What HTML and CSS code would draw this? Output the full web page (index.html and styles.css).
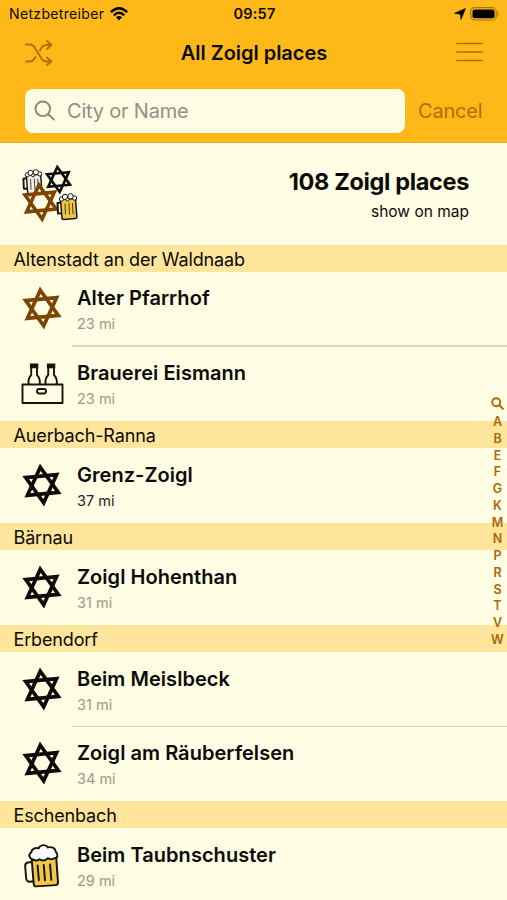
FILE: index.html
```html
<!DOCTYPE html>
<html lang="en">
<head>
<meta charset="utf-8">
<title>All Zoigl places</title>
<link rel="stylesheet" href="styles.css">
</head>
<body>
<svg class="defs" aria-hidden="true">
  <symbol id="star" viewBox="-22 -22 44 44">
    <g transform="rotate(-5.500)" fill="none" stroke="currentColor" stroke-width="3.700">
      <path d="M0-17.800 15.500 8.900H-15.500Z"/>
      <path d="M0 17.800 15.500-8.900H-15.500Z"/>
    </g>
  </symbol>
  <symbol id="mug" viewBox="0 0 44 48">
    <g stroke="#17140c" stroke-width="2" stroke-linejoin="round" stroke-linecap="round">
      <path fill="none" d="M11 19.500 6.500 20Q3.600 20.500 3.800 24L4.800 36Q5.200 40 9 39.500L12 39"/>
      <path d="M10.500 17 12.500 42Q12.800 44.500 15 44.300L35 43Q37.500 42.800 37.300 40L35.500 15Z"/>
      <path fill="none" d="M16.500 23 17.800 38M22.800 22.500 24 38M29.200 22 30.500 37.500"/>
      <path fill="#fff" d="M12 17C8 16 6.500 12 10 9.500C10.500 6 14 4.500 17.500 5.500C19 1.500 25 1 27 4.500C31 3.500 35 5.500 35 9C38 11.500 37 15.500 33.500 15.500C31 18 28.500 16 27 15.500C24 19 20 18 18.500 16.500C16 18.500 13.500 18 12 17Z"/>
    </g>
  </symbol>
  <symbol id="mini-mug" viewBox="0 0 24 29">
    <g stroke="#17140c" stroke-width="1.500" stroke-linejoin="round">
      <path fill="none" stroke-width="2" d="M6 10 2.500 10.500 3 21 7 21"/>
      <path d="M5.500 7 7 25.500Q7 27 9 27L20 26Q22 26 21.800 24L20.500 6Z"/>
      <path fill="none" stroke-width=".8" d="M10 11 10.500 22M14 10.500 14.500 22M17.500 10.500 18 21.500"/>
      <g fill="#fff" stroke-width="1"><circle cx="6.500" cy="6.500" r="2.200"/><circle cx="19.500" cy="5.500" r="2.200"/><circle cx="10" cy="4.500" r="2.700"/><circle cx="15.500" cy="3.800" r="2.700"/><circle cx="12.500" cy="7" r="1.600"/></g>
    </g>
  </symbol>
</svg>
<header class="top">
  <div class="status">
    <div class="carrier"><span class="t carrier-name">Netzbetreiber</span>
      <svg width="18" height="14" viewBox="0 0 18 14"><g fill="none" stroke="#000" stroke-width="2.400"><path d="M.8 5.200Q9-2.600 17.200 5.200"/><path d="M3.800 8.300Q9 3.400 14.200 8.300"/></g><path d="M9 13.500 6 10.300Q9 7.800 12 10.300Z"/></svg>
    </div>
    <span class="t clock">09:57</span>
    <div class="power">
      <svg width="12" height="12" viewBox="0 0 12 12"><path d="M11.500.5 7 11.500 6.300 6.200.5 5.300Z" stroke="#000" stroke-width=".6" stroke-linejoin="round"/></svg>
      <svg width="30" height="14" viewBox="0 0 30 14"><rect x=".7" y=".7" width="25.600" height="12.300" rx="3.800" fill="none" stroke="#a97710" stroke-width="1.200"/><rect x="2.500" y="2.500" width="22" height="8.700" rx="2"/><path d="M27.600 4.500Q30 7 27.600 9.500Z" fill="#a97710"/></svg>
    </div>
  </div>
  <div class="nav">
    <svg width="28" height="26" viewBox="0 0 28 26" fill="none" stroke="#b86c00" stroke-width="1.900" stroke-linecap="round" stroke-linejoin="round"><path d="M1 4.500H5Q8 4.500 10 8L15.500 17Q18 21.500 21 21.500H26M22 17.500 26.300 21.500 22 25M1 21.500H5Q8 21.500 10.500 17M15 10.500Q17.500 5 21 5H26M22 1 26.300 5 22 9"/></svg>
    <h1 class="t title">All Zoigl places</h1>
    <svg width="27" height="21" viewBox="0 0 27 21" stroke="#b86c00" stroke-width="1.700" stroke-linecap="round"><path d="M1 1.500H26M1 10H26M1 18.500H26"/></svg>
  </div>
  <div class="search">
    <div class="field">
      <svg width="22" height="22" viewBox="0 0 22 22" fill="none" stroke="#898779" stroke-width="1.900" stroke-linecap="round"><circle cx="8.800" cy="8.800" r="7.300"/><path d="m14.300 14.300 5.500 5.200"/></svg>
      <span class="t placeholder">City or Name</span>
    </div>
    <span class="t cancel">Cancel</span>
  </div>
</header>
<main>
  <section class="summary">
    <svg width="60" height="60" viewBox="0 0 60 60">
      <use class="pale" href="#mini-mug" x="0" y="4.500" width="23" height="28"/>
      <use href="#star" x="22" y="0" width="31" height="31"/>
      <use class="brown" href="#star" x="-1.500" y="17" width="42" height="42"/>
      <use class="gold" href="#mini-mug" x="34" y="27.500" width="24" height="31"/>
    </svg>
    <div class="summary-text"><h2 class="t count">108 Zoigl places</h2><span class="t map">show on map</span></div>
  </section>

  <h3 class="city"><span class="t">Altenstadt an der Waldnaab</span></h3>
  <article class="place"><svg class="icon brown"><use href="#star"/></svg><div class="info"><b class="t">Alter Pfarrhof</b><small>23 mi</small></div></article>
  <article class="place divided">
    <svg class="icon" viewBox="0 0 44 44" fill="none" stroke="#17140c" stroke-width="1.900" stroke-linejoin="round"><path d="M2.500 23.500H42.500V42H2.500ZM8.500 23V19.500Q8.700 16.500 11.200 14V5H17V14Q19.500 16.500 19.800 19.500V23M25.500 23V19.500Q25.700 16.500 28.200 14V5H34V14Q36.500 16.500 36.800 19.500V23"/><rect x="17" y="28" width="9" height="4.500" rx="2.200"/><path d="M9.900 2.600H18.300V7.200H9.900ZM26.900 2.600H35.300V7.200H26.900Z" fill="#17140c" stroke="none"/></svg>
    <div class="info"><b class="t">Brauerei Eismann</b><small>23 mi</small></div></article>

  <h3 class="city"><span class="t">Auerbach-Ranna</span></h3>
  <article class="place"><svg class="icon"><use href="#star"/></svg><div class="info"><b class="t">Grenz-Zoigl</b><small class="open">37 mi</small></div></article>

  <h3 class="city"><span class="t">Bärnau</span></h3>
  <article class="place"><svg class="icon"><use href="#star"/></svg><div class="info"><b class="t">Zoigl Hohenthan</b><small>31 mi</small></div></article>

  <h3 class="city"><span class="t">Erbendorf</span></h3>
  <article class="place"><svg class="icon"><use href="#star"/></svg><div class="info"><b class="t">Beim Meislbeck</b><small>31 mi</small></div></article>
  <article class="place divided"><svg class="icon"><use href="#star"/></svg><div class="info"><b class="t">Zoigl am Räuberfelsen</b><small>34 mi</small></div></article>

  <h3 class="city"><span class="t">Eschenbach</span></h3>
  <article class="place"><svg class="icon gold mug"><use href="#mug"/></svg><div class="info"><b class="t">Beim Taubnschuster</b><small>29 mi</small></div></article>
</main>
<nav class="index">
  <svg width="13" height="13" viewBox="0 0 13 13" fill="none" stroke="#b06605" stroke-width="1.900" stroke-linecap="round"><circle cx="5.200" cy="5.200" r="4"/><path d="m8.300 8.300 3.600 3.500"/></svg>
  <span>A</span><span>B</span><span>E</span><span>F</span><span>G</span><span>K</span><span>M</span><span>N</span><span>P</span><span>R</span><span>S</span><span>T</span><span>V</span><span>W</span>
</nav>
</body>
</html>
```
FILE: styles.css
```css
* { box-sizing: border-box; }
html, body { margin: 0; height: 900px; overflow: hidden; }
body { position: relative; background: #fffde3; color: #0c0b07; font-family: Inter, "Liberation Sans", sans-serif; }
h1, h2, h3 { margin: 0; }
svg { display: block; flex: none; }
.defs { position: absolute; width: 0; height: 0; }
.t { white-space: nowrap; }
.brown { color: #7d4404; }
.gold { fill: #f0c748; }
.pale { fill: #eeeee8; }

.top { height: 143px; background: #feb818; border-bottom: 1px solid #dfad3b; }
.status { display: grid; grid-template-columns: 1fr auto 1fr; align-items: center; height: 27px; padding: 0 7px 0 9px; }
.carrier { display: flex; align-items: center; gap: 6px; }
.carrier-name { font-size: 14px; letter-spacing: .34px; }
.clock { font-size: 14.500px; font-weight: 600; letter-spacing: .2px; }
.power { display: flex; justify-content: flex-end; align-items: center; gap: 4px; }
.nav { display: grid; grid-template-columns: 1fr auto 1fr; align-items: center; height: 51px; padding: 0 24px 0 25px; }
.nav svg:last-child { justify-self: end; }
.title { font-size: 20px; font-weight: 600; letter-spacing: -.04px; }
.search { display: flex; align-items: center; height: 65px; padding: 0 25px; gap: 13.500px; }
.field { display: flex; flex: none; align-items: center; gap: 11px; width: 379.500px; height: 44px; padding-left: 9px; border-radius: 8px; background: #fffde3; }
.placeholder { color: #929087; font-size: 20px; letter-spacing: -.2px; }
.cancel { color: #b86c00; font-size: 20px; letter-spacing: -.2px; }

.summary { display: flex; justify-content: space-between; height: 101.600px; padding: 21px 38px 0 21px; }
.summary-text { display: flex; flex-direction: column; align-items: flex-end; padding-top: 3px; }
.count { font-size: 23.500px; line-height: 30px; font-weight: 700; letter-spacing: -.35px; margin-right: 0; }
.map { margin-top: 5px; font-size: 15.500px; line-height: 20px; }
.city { height: 27.200px; padding-left: 13.500px; background: #ffe69c; font-size: 18px; line-height: 30px; font-weight: 400; letter-spacing: -.14px; }
.place { position: relative; display: flex; height: 74.650px; padding: 14.700px 0 0 20px; gap: 13px; }
.divided::before { content: ""; position: absolute; top: -1px; left: 72px; right: 0; height: 1.500px; background: #d9d8c5; }
.icon { width: 44px; height: 44px; }
.mug { height: 47px; margin-left: 1px; margin-right: -1px; }
.info { display: flex; flex-direction: column; align-items: flex-start; }
.info b { font-size: 20px; line-height: 24px; font-weight: 600; letter-spacing: .04px; }
.info small { margin-top: 5px; font-size: 14.500px; line-height: 18px; color: #9b9a8b; }
.info .open { color: #24231d; }
.index { position: absolute; top: 397px; right: 1px; width: 17px; display: flex; flex-direction: column; align-items: center; color: #b06605; font-size: 12.500px; font-weight: 600; line-height: 16.750px; }
.index svg { margin-bottom: 4px; }
```
